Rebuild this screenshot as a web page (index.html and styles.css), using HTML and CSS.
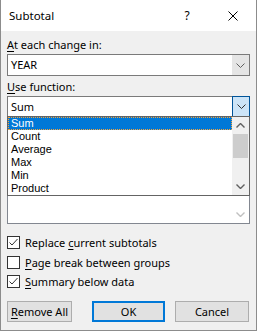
FILE: index.html
```html
<!DOCTYPE html>
<html lang="en">
<head>
    <meta charset="UTF-8">
    <title>Subtotal</title>
    <link rel="stylesheet" href="styles.css">
</head>
<body>

    <div class="dialog">
        <!-- Title bar -->
        <div class="titlebar">
            <span class="title">Subtotal</span>
            <span class="title-btn help">?</span>
            <span class="title-btn close">
                <svg width="10" height="10" viewBox="0 0 10 10"><path d="M0.5 0.5 L9.5 9.5 M9.5 0.5 L0.5 9.5" stroke="#000" stroke-width="1" fill="none"/></svg>
            </span>
        </div>

        <div class="content">
            <div class="label"><u>A</u>t each change in:</div>
            <div class="combo">
                <span class="combo-text">YEAR</span>
                <span class="combo-btn">
                    <svg width="9" height="5" viewBox="0 0 9 5"><path d="M0.5 0.5 L4.5 4.5 L8.5 0.5" stroke="#606060" fill="none"/></svg>
                </span>
            </div>

            <div class="label label-tight"><u>U</u>se function:</div>
            <div class="combo-wrap">
                <div class="combo combo-open">
                    <span class="combo-text">Sum</span>
                    <span class="combo-btn">
                        <svg width="9" height="5" viewBox="0 0 9 5"><path d="M0.5 0.5 L4.5 4.5 L8.5 0.5" stroke="#333" fill="none"/></svg>
                    </span>
                </div>

                <!-- Open drop-down list, covers the field list -->
                <div class="dropdown">
                    <ul class="options">
                        <li class="selected">Sum</li>
                        <li>Count</li>
                        <li>Average</li>
                        <li>Max</li>
                        <li>Min</li>
                        <li>Product</li>
                    </ul>
                    <div class="scrollbar">
                        <span class="arrow">
                            <svg width="9" height="5" viewBox="0 0 9 5"><path d="M0.5 4.5 L4.5 0.5 L8.5 4.5" stroke="#606060" stroke-width="1.4" fill="none"/></svg>
                        </span>
                        <span class="track"><span class="thumb"></span></span>
                        <span class="arrow">
                            <svg width="9" height="5" viewBox="0 0 9 5"><path d="M0.5 0.5 L4.5 4.5 L8.5 0.5" stroke="#606060" stroke-width="1.4" fill="none"/></svg>
                        </span>
                    </div>
                </div>
            </div>

            <div class="listbox">
                <div class="list-area"></div>
                <div class="list-scroll">
                    <svg width="9" height="5" viewBox="0 0 9 5"><path d="M0.5 0.5 L4.5 4.5 L8.5 0.5" stroke="#c0c0c0" stroke-width="1.4" fill="none"/></svg>
                </div>
            </div>

            <!-- Options -->
            <div class="checks">
                <div class="check-row">
                    <span class="checkbox">
                        <svg width="11" height="11" viewBox="0 0 11 11"><path d="M1.5 5.5 L4 8 L9.5 2" stroke="#333" fill="none"/></svg>
                    </span>
                    <span>Replace <u>c</u>urrent subtotals</span>
                </div>
                <div class="check-row">
                    <span class="checkbox"></span>
                    <span><u>P</u>age break between groups</span>
                </div>
                <div class="check-row">
                    <span class="checkbox">
                        <svg width="11" height="11" viewBox="0 0 11 11"><path d="M1.5 5.5 L4 8 L9.5 2" stroke="#333" fill="none"/></svg>
                    </span>
                    <span><u>S</u>ummary below data</span>
                </div>
            </div>

            <div class="buttons">
                <button class="btn btn-remove"><u>R</u>emove All</button>
                <button class="btn btn-ok">OK</button>
                <button class="btn btn-cancel">Cancel</button>
            </div>
        </div>
    </div>

</body>
</html>
```

FILE: styles.css
```css
body, html {
    margin: 0;
    padding: 0;
    background: #f0f0f0;
    font-family: "Noto Sans", "Open Sans", sans-serif;
    font-size: 11px;
    color: #000;
}

.dialog {
    width: 257px;
    height: 331px;
    box-sizing: border-box;
    border: 1px solid #8c8c8c;
    border-top: none;
    background: #f0f0f0;
    display: flex;
    flex-direction: column;
}

/* Title bar */
.titlebar {
    height: 31px;
    background: #fff;
    display: flex;
    align-items: center;
}

.title {
    flex: 1;
    padding-left: 8px;
    font-size: 11.5px;
}

.title-btn {
    width: 46px;
    height: 31px;
    display: flex;
    justify-content: center;
    align-items: center;
}

.help {
    font-size: 12px;
}

/* Content */
.content {
    padding: 0 6px;
    display: flex;
    flex-direction: column;
}

.label {
    line-height: 16px;
    margin-top: 6px;
    margin-bottom: 1px;
}

.label-tight {
    margin-top: 3px;
}

u {
    text-underline-offset: 2px;
}

.combo {
    height: 22px;
    box-sizing: border-box;
    border: 1px solid #7a7a7a;
    background: #fff;
    display: flex;
}

.combo-text {
    flex: 1;
    padding-left: 3px;
    line-height: 20px;
}

.combo-btn {
    width: 17px;
    background: #e5e5e5;
    display: flex;
    justify-content: center;
    align-items: center;
}

.combo-wrap {
    position: relative;
}

.combo-open {
    height: 21px;
}

.combo-open .combo-text {
    line-height: 19px;
}

.combo-open .combo-btn {
    box-sizing: border-box;
    width: 18px;
    margin: -1px -1px -1px 0;
    background: #cce4f7;
    border: 1px solid #005499;
}

/* Drop-down list */
.dropdown {
    position: absolute;
    top: 20px;
    left: 0;
    right: 0;
    height: 80px;
    box-sizing: border-box;
    border: 1px solid #646464;
    background: #fff;
    display: flex;
    z-index: 2;
}

.options {
    flex: 1;
    list-style: none;
    margin: 0;
    padding: 0;
    font-family: "Liberation Sans", Arial, sans-serif;
    font-size: 11px;
}

.options li {
    height: 13px;
    line-height: 13px;
    padding-left: 3px;
}

.options li.selected {
    background: #0078d7;
    color: #fff;
    outline: 1px dotted #f7a43a;
    outline-offset: -1px;
}

.scrollbar {
    width: 17px;
    background: #f0f0f0;
    display: flex;
    flex-direction: column;
}

.arrow {
    height: 17px;
    display: flex;
    justify-content: center;
    align-items: center;
}

.track {
    flex: 1;
    display: flex;
    flex-direction: column;
    padding: 0 1px;
}

.thumb {
    height: 24px;
    background: #cdcdcd;
}

/* Field list, mostly hidden under the drop-down */
.listbox {
    height: 87px;
    margin-top: 20px;
    box-sizing: border-box;
    border: 1px solid #828790;
    background: #fff;
    display: flex;
}

.list-area {
    flex: 1;
}

.list-scroll {
    width: 17px;
    display: flex;
    justify-content: center;
    align-items: flex-end;
    padding-bottom: 6px;
    box-sizing: border-box;
}

/* Checkboxes */
.checks {
    margin-top: 12px;
    display: flex;
    flex-direction: column;
    gap: 6.5px;
}

.check-row {
    height: 13px;
    display: flex;
    align-items: center;
    gap: 5px;
}

.checkbox {
    width: 13px;
    height: 13px;
    box-sizing: border-box;
    border: 1px solid #333;
    background: #fff;
    display: flex;
    justify-content: center;
    align-items: center;
}

/* Buttons */
.buttons {
    margin-top: 13px;
    display: flex;
}

.btn {
    height: 21px;
    box-sizing: border-box;
    border: 1px solid #adadad;
    background: #e1e1e1;
    font-family: inherit;
    font-size: 11px;
    color: #000;
    padding: 0;
}

.btn-remove {
    width: 65px;
}

.btn-ok {
    width: 73px;
    margin-left: 20px;
    border: 2px solid #0078d7;
}

.btn-cancel {
    width: 74px;
    margin-left: 10px;
}
```
